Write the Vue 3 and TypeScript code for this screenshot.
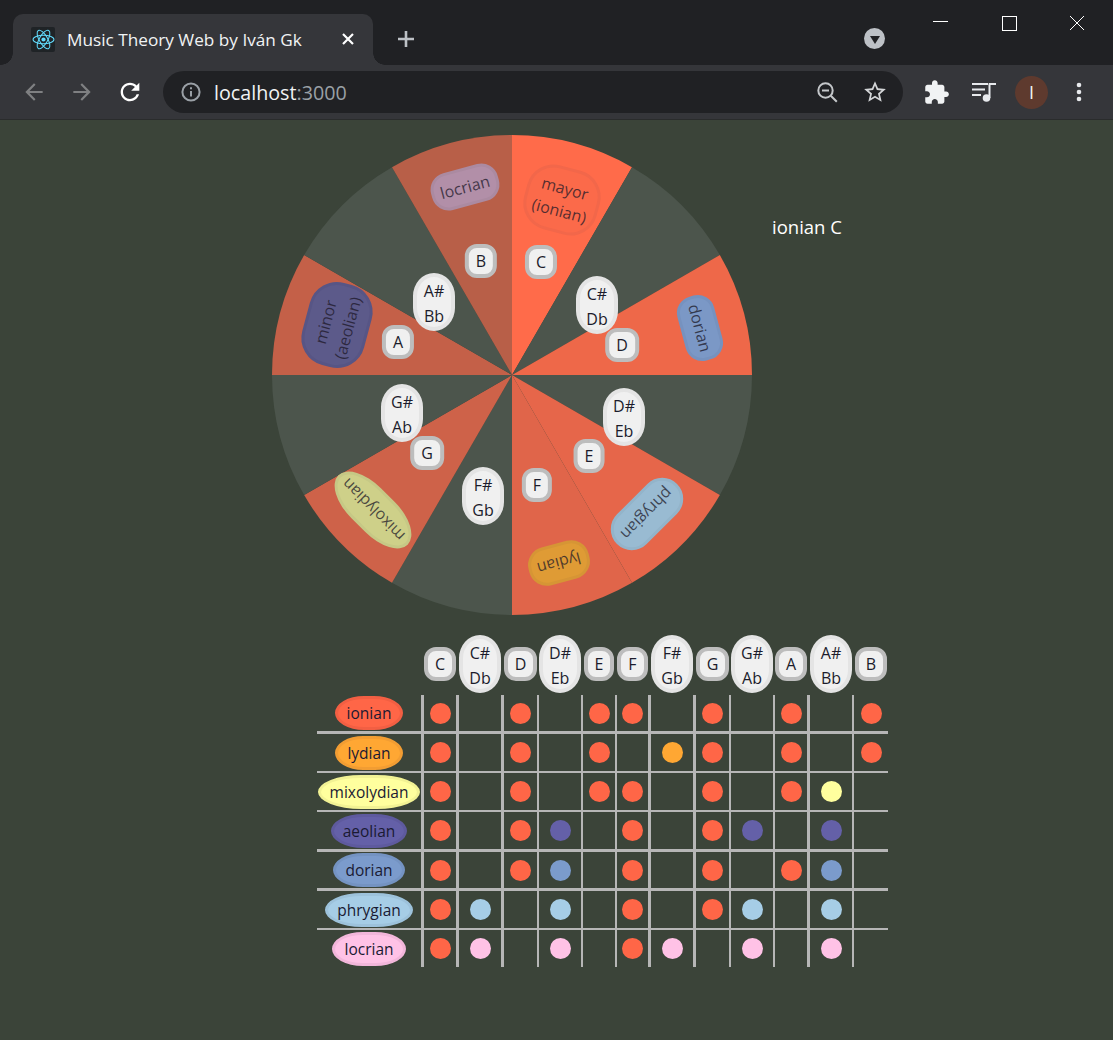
<template>
  <div class="page">
    <header class="browser">
      <div class="titlebar">
        <div class="tab">
          <span class="favicon">
            <svg width="23" height="23" viewBox="-11 -11 22 22" fill="none" stroke="#61dafb" stroke-width="1">
              <circle r="2" fill="#61dafb" stroke="none" />
              <ellipse rx="10" ry="4" />
              <ellipse rx="10" ry="4" transform="rotate(60)" />
              <ellipse rx="10" ry="4" transform="rotate(120)" />
            </svg>
          </span>
          <span class="tab-title">Music Theory Web by Iván Gk</span>
          <svg class="tab-close" width="14" height="14" viewBox="0 0 14 14" stroke="#fff" stroke-width="2.2">
            <path d="M2 2l10 10M12 2L2 12" />
          </svg>
        </div>
        <svg class="new-tab" width="18" height="18" viewBox="0 0 18 18" stroke="#bdc1c6" stroke-width="2.6">
          <path d="M9 1v16M1 9h16" />
        </svg>
        <span class="tab-search">
          <svg width="10" height="8" viewBox="0 0 10 8"><path d="M0 0h10L5 8z" fill="#202124" /></svg>
        </span>
        <div class="window-btns">
          <svg width="16" height="16" viewBox="0 0 16 16" stroke="#fff"><path d="M0 6.5h15" /></svg>
          <svg width="16" height="16" viewBox="0 0 16 16" fill="none" stroke="#fff"><rect x="1.5" y="1.5" width="14" height="14" /></svg>
          <svg width="16" height="16" viewBox="0 0 16 16" stroke="#fff"><path d="M1 1l14 14M15 1L1 15" /></svg>
        </div>
      </div>
      <div class="toolbar">
        <svg class="nav" width="26" height="26" viewBox="0 0 24 24" fill="#7f8082"><path d="M20 11H7.83l5.59-5.59L12 4l-8 8 8 8 1.41-1.41L7.83 13H20v-2z" /></svg>
        <svg class="nav" width="26" height="26" viewBox="0 0 24 24" fill="#7f8082"><path d="M12 4l-1.41 1.41L16.17 11H4v2h12.17l-5.58 5.59L12 20l8-8z" /></svg>
        <svg class="nav" width="28" height="28" viewBox="0 0 24 24" fill="#fff"><path d="M17.65 6.35C16.2 4.9 14.21 4 12 4c-4.42 0-7.99 3.58-7.99 8s3.57 8 7.99 8c3.73 0 6.84-2.55 7.73-6h-2.08c-.82 2.33-3.04 4-5.65 4-3.31 0-6-2.69-6-6s2.69-6 6-6c1.66 0 3.14.69 4.22 1.78L13 11h7V4l-2.35 2.35z" /></svg>
        <div class="omnibox">
          <svg width="20" height="20" viewBox="0 0 20 20" fill="none" stroke="#9aa0a6" stroke-width="2">
            <circle cx="10" cy="10" r="8.6" />
            <path d="M10 9v5.5" />
            <path d="M10 5.2v2" />
          </svg>
          <span class="url"><b>localhost</b><i>:3000</i></span>
          <svg class="zoom-icon" width="24" height="24" viewBox="0 0 24 24" fill="none" stroke="#c4c7ca" stroke-width="2">
            <circle cx="10.5" cy="10.5" r="7.2" />
            <path d="M7 10.5h7M15.8 15.8l6 6" />
          </svg>
          <svg width="26" height="26" viewBox="0 0 24 24" fill="#d4d6d8"><path d="M22 9.24l-7.19-.62L12 2 9.19 8.63 2 9.24l5.46 4.73L5.82 21 12 17.27 18.18 21l-1.63-7.03L22 9.24zM12 15.4l-3.76 2.27 1-4.28-3.32-2.88 4.38-.38L12 6.1l1.71 4.04 4.38.38-3.32 2.88 1 4.28L12 15.4z" /></svg>
        </div>
        <svg class="puzzle" width="27" height="27" viewBox="0 0 24 24" fill="#f1f3f4"><path d="M20.5 11H19V7c0-1.1-.9-2-2-2h-4V3.5C13 2.12 11.88 1 10.5 1S8 2.12 8 3.5V5H4c-1.1 0-1.99.9-1.99 2v3.8H3.5c1.49 0 2.7 1.21 2.7 2.7s-1.21 2.7-2.7 2.7H2V20c0 1.1.9 2 2 2h3.8v-1.5c0-1.49 1.21-2.7 2.7-2.7 1.49 0 2.7 1.21 2.7 2.7V22H17c1.1 0 2-.9 2-2v-4h1.5c1.38 0 2.5-1.12 2.5-2.5S21.88 11 20.5 11z" /></svg>
        <svg class="media" width="26" height="24" viewBox="0 0 26 24" fill="#e8eaed">
          <rect x="1" y="3" width="16" height="2" />
          <rect x="1" y="8.5" width="13" height="2" />
          <rect x="1" y="14" width="9" height="2" />
          <circle cx="15.5" cy="18" r="3.8" />
          <path d="M17.5 18V4.2c0-.7.5-1.2 1.2-1.2H25v2h-5.5v13z" />
        </svg>
        <span class="avatar">I</span>
        <svg class="menu" width="6" height="20" viewBox="0 0 6 20" fill="#e8eaed">
          <circle cx="3" cy="3" r="2.3" />
          <circle cx="3" cy="10" r="2.3" />
          <circle cx="3" cy="17" r="2.3" />
        </svg>
      </div>
    </header>

    <main class="content">
      <div class="wheel-row">
        <div class="wheel">
          <svg width="480" height="480" viewBox="0 0 480 480">
            <path v-for="w in wedges" :key="w.note" :d="w.d" :fill="w.fill" />
          </svg>
          <span
            v-for="m in wheelModes"
            :key="m.name"
            class="wheel-mode"
            :style="{ left: m.x + 'px', top: m.y + 'px', width: m.w + 'px', height: m.h + 'px', background: m.bg, borderColor: m.line, borderRadius: m.radius, transform: `translate(-50%, -50%) rotate(${m.rot}deg)` }"
          >{{ m.name }}</span>
          <span
            v-for="n in wheelNotes"
            :key="n.label"
            class="note wheel-note"
            :class="{ double: n.label.includes(' ') }"
            :style="{ left: n.x + 'px', top: n.y + 'px' }"
          >
            <span v-for="part in n.label.split(' ')" :key="part">{{ part }}</span>
          </span>
        </div>
        <p class="current">ionian C</p>
      </div>

      <div class="matrix">
        <div class="corner"></div>
        <div v-for="(c, i) in notes" :key="c" class="head" :class="{ thick: thickCols[i] }">
          <span class="note" :class="{ double: c.includes(' ') }">
            <span v-for="part in c.split(' ')" :key="part">{{ part }}</span>
          </span>
        </div>
        <template v-for="row in rows" :key="row.name">
          <div class="mode-cell" :class="row.rule">
            <span class="mode-pill" :style="{ background: row.color, borderColor: row.line }">{{ row.name }}</span>
          </div>
          <div
            v-for="(v, i) in row.cells"
            :key="i"
            class="cell"
            :class="[row.rule, { thick: thickCols[i] }]"
          >
            <span v-if="v" class="dot" :style="{ background: v === 1 ? tomato : row.color }"></span>
          </div>
        </template>
      </div>
    </main>
  </div>
</template>

<script setup lang="ts">
const tomato = '#ff6647'

const notes = ['C', 'C# Db', 'D', 'D# Eb', 'E', 'F', 'F# Gb', 'G', 'G# Ab', 'A', 'A# Bb', 'B']
const thickCols = [true, true, true, false, false, false, true, true, false, false, true, false]

// 0 empty, 1 base scale dot, 2 altered dot in the mode's colour
const rows = [
  { name: 'ionian', rule: '', color: '#ff6647', line: '#f25f43', cells: [1, 0, 1, 0, 1, 1, 0, 1, 0, 1, 0, 1] },
  { name: 'lydian', rule: 'bar', color: '#ffa733', line: '#f29d33', cells: [1, 0, 1, 0, 1, 0, 2, 1, 0, 1, 0, 1] },
  { name: 'mixolydian', rule: 'thin', color: '#ffff9e', line: '#f2f294', cells: [1, 0, 1, 0, 1, 1, 0, 1, 0, 1, 2, 0] },
  { name: 'aeolian', rule: 'thin', color: '#6460a8', line: '#5e5a9e', cells: [1, 0, 1, 2, 0, 1, 0, 1, 2, 0, 2, 0] },
  { name: 'dorian', rule: 'bar', color: '#7b9bcc', line: '#7493c2', cells: [1, 0, 1, 2, 0, 1, 0, 1, 0, 1, 2, 0] },
  { name: 'phrygian', rule: 'bar', color: '#a6cde6', line: '#9dc2db', cells: [1, 2, 0, 2, 0, 1, 0, 1, 2, 0, 2, 0] },
  { name: 'locrian', rule: 'thin', color: '#ffc2e6', line: '#f2b6da', cells: [1, 2, 0, 2, 0, 1, 2, 0, 2, 0, 2, 0] },
]

const wedgeFills = [
  '#ff6b4a', '#4c554c', '#ee6849', '#4c554c', '#e6664a', '#e0654a',
  '#4c554c', '#ce6249', '#4c554c', '#c46048', '#4c554c', '#b85f48',
]

function polar(deg: number, r: number) {
  const a = (deg * Math.PI) / 180
  return `${(240 + r * Math.sin(a)).toFixed(2)} ${(240 - r * Math.cos(a)).toFixed(2)}`
}

const wedges = wedgeFills.map((fill, i) => ({
  note: notes[i],
  fill,
  d: `M240 240L${polar(i * 30, 240)}A240 240 0 0 1 ${polar(i * 30 + 30, 240)}Z`,
}))

// centres below are relative to the wheel box (272, 135)
const wheelModes = [
  { name: 'mayor (ionian)', x: 290, y: 65, w: 75, h: 66, rot: 15, radius: '27px', bg: '#fb6a4a', line: '#f2674a' },
  { name: 'dorian', x: 428, y: 193, w: 66, h: 38, rot: 75, radius: '17px', bg: '#7b98c6', line: '#7692bf' },
  { name: 'phrygian', x: 375, y: 379, w: 85, h: 42, rot: 135, radius: '23px', bg: '#99bbd2', line: '#93b4ca' },
  { name: 'lydian', x: 287, y: 428, w: 62, h: 39, rot: 165, radius: '18px', bg: '#df9b35', line: '#d69535' },
  { name: 'mixolydian', x: 100.5, y: 375, w: 98, h: 42, rot: 225, radius: '40% / 50%', bg: '#ced089', line: '#c6c885' },
  { name: 'minor (aeolian)', x: 65, y: 190, w: 85, h: 64, rot: 285, radius: '28px', bg: '#5c5a8a', line: '#575585' },
  { name: 'locrian', x: 193, y: 52, w: 69, h: 38, rot: 345, radius: '17px', bg: '#b28fa8', line: '#ab8aa1' },
]

const wheelNotes = [
  { label: 'C', x: 269, y: 127 },
  { label: 'C# Db', x: 325, y: 170 },
  { label: 'D', x: 350, y: 210 },
  { label: 'D# Eb', x: 352, y: 282 },
  { label: 'E', x: 317, y: 321 },
  { label: 'F', x: 265, y: 350 },
  { label: 'F# Gb', x: 211, y: 361 },
  { label: 'G', x: 155, y: 318 },
  { label: 'G# Ab', x: 130, y: 278 },
  { label: 'A', x: 126, y: 207 },
  { label: 'A# Bb', x: 162, y: 167 },
  { label: 'B', x: 209, y: 126 },
]
</script>

<style>
html,
body {
  margin: 0;
  background: #3b4439;
}
</style>

<style scoped>
.page {
  width: 1113px;
  height: 1040px;
  overflow: hidden;
  font-family: "Open Sans", "Noto Sans", sans-serif;
  background: #3b4439;
}

.browser {
  height: 120px;
  background: #202124;
  box-sizing: border-box;
  border-bottom: 1px solid #2a2c2c;
}

.titlebar {
  height: 65px;
  display: flex;
  align-items: flex-end;
}

.tab {
  position: relative;
  width: 360px;
  height: 51px;
  margin-left: 13px;
  box-sizing: border-box;
  padding: 0 17px 1px 18px;
  display: flex;
  align-items: center;
  background: #35363a;
  border-radius: 10px 10px 0 0;
}

.tab::before,
.tab::after {
  content: "";
  position: absolute;
  bottom: 0;
  width: 12px;
  height: 12px;
}

.tab::before {
  left: -12px;
  background: radial-gradient(circle at 0 0, transparent 11.5px, #35363a 12px);
}

.tab::after {
  right: -12px;
  background: radial-gradient(circle at 100% 0, transparent 11.5px, #35363a 12px);
}

.favicon {
  width: 24px;
  height: 25px;
  background: #1f2326;
  border-radius: 2px;
  display: flex;
  align-items: center;
  justify-content: center;
}

.tab-title {
  margin-left: 12px;
  color: #f1f3f4;
  font-size: 17.2px;
  white-space: nowrap;
  flex: 1;
}

.tab-close {
  margin-right: 1px;
}

.new-tab {
  margin: 0 0 17px 24px;
}

.tab-search {
  width: 21px;
  height: 21px;
  margin: 0 0 16px 449px;
  border-radius: 50%;
  background: #bdc1c6;
  display: flex;
  align-items: center;
  justify-content: center;
}

.tab-search svg {
  margin-top: 2px;
}

.window-btns {
  align-self: flex-start;
  display: flex;
  gap: 52px;
  margin: 15px 0 0 48px;
}

.toolbar {
  height: 54px;
  background: #35363a;
  display: flex;
  align-items: center;
  position: relative;
}

.nav {
  flex: none;
}

.nav:nth-child(1) {
  margin-left: 21px;
}

.nav:nth-child(2) {
  margin-left: 22px;
}

.nav:nth-child(3) {
  margin-left: 21px;
}

.omnibox {
  width: 740px;
  height: 42px;
  margin-left: 19px;
  box-sizing: border-box;
  padding: 0 15px 0 18px;
  border-radius: 21px;
  background: #202124;
  display: flex;
  align-items: center;
}

.url {
  margin-left: 13px;
  flex: 1;
  font-size: 19.7px;
}

.url b {
  font-weight: 400;
  color: #f1f3f4;
}

.url i {
  font-style: normal;
  color: #9aa0a6;
}

.zoom-icon {
  margin-right: 23px;
}

.puzzle {
  margin-left: 20px;
}

.media {
  margin-left: 21px;
}

.avatar {
  width: 33px;
  height: 33px;
  margin-left: 18px;
  border-radius: 50%;
  background: #5e3a2e;
  color: #f1f3f4;
  font-size: 18px;
  display: flex;
  align-items: center;
  justify-content: center;
}

.menu {
  margin-left: 28px;
}

.content {
  padding: 15px 0 0 272px;
}

.wheel-row {
  display: flex;
  align-items: flex-start;
  gap: 20px;
}

.wheel {
  position: relative;
  width: 480px;
  height: 480px;
  flex: none;
}

.wheel svg {
  display: block;
}

.current {
  margin: 79px 0 0;
  color: #fff;
  font-size: 18.5px;
  line-height: 26px;
}

.wheel-mode {
  position: absolute;
  box-sizing: border-box;
  padding: 0 8px;
  border: 3px solid;
  display: flex;
  align-items: center;
  justify-content: center;
  text-align: center;
  color: rgba(28, 24, 40, 0.75);
  font-size: 16px;
  line-height: 23px;
}

.note {
  box-sizing: border-box;
  min-height: 34px;
  padding: 1px 7px;
  border: 4px solid #bdbdbd;
  border-radius: 12px;
  background: #f0f0f0;
  display: inline-flex;
  flex-direction: column;
  align-items: center;
  justify-content: center;
  color: #1c1c2c;
  font-size: 16px;
  line-height: 24px;
  white-space: nowrap;
}

.note.double {
  width: 42px;
  height: 58px;
  padding: 3px 0 0;
  border-color: #e4e4e4;
  border-radius: 21px / 23px;
  line-height: 25px;
}

.wheel-note {
  position: absolute;
  transform: translate(-50%, -50%);
}

.matrix {
  margin: 20px 0 0 45px;
  display: grid;
  width: 571px;
  grid-template-columns: 104px 35px 45px 36px 44px 34px 33px 45px 36px 44px 34px 45px 36px;
  grid-template-rows: 60px 36px 40px 39px 39px 39px 40px 39px;
}

.head {
  box-sizing: border-box;
  border-left: 2px solid transparent;
  display: flex;
  align-items: flex-start;
  justify-content: center;
  padding-top: 12px;
}

.head.thick {
  border-left-width: 3px;
}

.head:has(.double) {
  padding-top: 0;
}

.mode-cell,
.cell {
  box-sizing: border-box;
  display: flex;
  align-items: center;
  justify-content: center;
}

.cell {
  border-left: 2px solid #b6b6b6;
}

.cell.thick {
  border-left-width: 3px;
}

.thin {
  border-top: 2px solid #b6b6b6;
}

.bar {
  border-top: 3px solid #b6b6b6;
}

.mode-pill {
  box-sizing: border-box;
  height: 34px;
  padding: 0 9px;
  border: 3px solid;
  border-radius: 42% / 50%;
  display: flex;
  align-items: center;
  color: #1a1a33;
  font-size: 15.5px;
}

.dot {
  width: 21px;
  height: 21px;
  border-radius: 50%;
}
</style>
